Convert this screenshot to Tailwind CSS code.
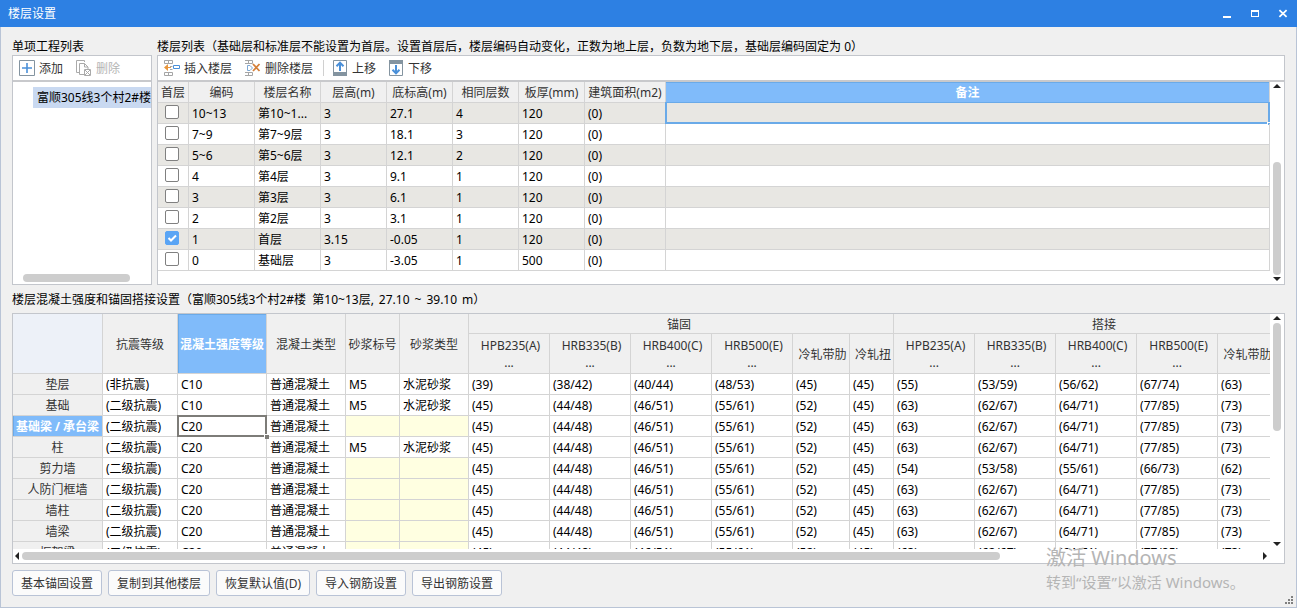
<!DOCTYPE html>
<html lang="zh-CN">
<head>
<meta charset="utf-8">
<title>楼层设置</title>
<script src="https://cdn.jsdelivr.net/npm/@tailwindcss/browser@4"></script>
</head>
<body class="font-['Noto_Sans','Noto_Sans_CJK_SC',sans-serif] text-xs leading-4 text-black">
<div class="relative flex h-screen flex-col overflow-hidden bg-[#f0f0f0]">
  <header class="flex h-[27px] shrink-0 items-center justify-between bg-[#2d80e3] pr-1.5 pl-2 text-white">
    <h1 class="pt-px">楼层设置</h1>
    <div class="flex gap-3">
      <button type="button" aria-label="最小化" class="flex size-4 items-center justify-center"><svg width="10" height="10" viewBox="0 0 10 10" fill="#fff"><path d="M1 7h8v2H1z"/></svg></button>
      <button type="button" aria-label="最大化" class="flex size-4 items-center justify-center"><svg width="10" height="10" viewBox="0 0 10 10" fill="#fff" fill-rule="evenodd"><path d="M1 1h8v7H1zM2 3v4h6V3z"/></svg></button>
      <button type="button" aria-label="关闭" class="flex size-4 items-center justify-center"><svg width="10" height="10" viewBox="0 0 10 10" stroke="#fff" stroke-width="1.8"><path d="M1.400 1.200l7.200 6.600M8.600 1.200L1.400 7.800"/></svg></button>
    </div>
  </header>

  <main class="flex min-h-0 flex-1 flex-col border-x border-b border-[#b9c4d6] px-[11px] pt-3 pb-[11px]">
    <div class="flex gap-[5px]">
      <section class="flex w-[140px] shrink-0 flex-col">
        <h2 class="h-4">单项工程列表</h2>
        <div class="flex h-[230px] flex-col border border-[#c3c6cc] bg-white">
          <div class="flex h-[26px] shrink-0 items-center gap-px border-b-2 border-[#c8c9cc] text-[#333]">
            <button type="button" class="flex h-5 items-center gap-1 px-1.5"><svg width="16" height="16" viewBox="0 0 16 16" fill="none"><path d="M.5.5h15v15H.5z" stroke="#8494a0"/><path d="M3 8h10M8 3v10" stroke="#4a90d9" stroke-width="1.6"/></svg><span class="pt-[2px]">添加</span></button>
            <button type="button" disabled class="flex h-5 items-center gap-1 px-1.5 text-[#b4b4b4]"><svg width="16" height="16" viewBox="0 0 16 16" fill="none" stroke="#aaa"><path d="M3 12.500H.5V.5h8V2"/><path d="M8 14.500H3.500V3.500h5l3.500 3.500v2M8.500 3.500V7H12"/><path d="M8.500 9.500h6v6h-6zM9 10l5 5M14 10l-5 5"/></svg><span class="pt-[2px]">删除</span></button>
          </div>
          <div class="flex min-h-0 flex-1 flex-col justify-between overflow-hidden pt-[5px] pb-[2px]">
            <div class="ml-5 h-[21px] overflow-hidden bg-[#c9d9f1] pl-1 leading-[21px] whitespace-nowrap">富顺305线3个村2#楼</div>
            <div class="ml-2.5 h-2 w-[107px] rounded-full bg-[#cdcdcd]"></div>
          </div>
        </div>
      </section>

      <section class="flex min-w-0 flex-1 flex-col">
        <h2 class="h-4 whitespace-nowrap">楼层列表（基础层和标准层不能设置为首层。设置首层后，楼层编码自动变化，正数为地上层，负数为地下层，基础层编码固定为 0）</h2>
        <div class="flex h-[230px] flex-col border border-[#c3c6cc] bg-white">
          <div class="flex h-[26px] shrink-0 items-center gap-px border-b-2 border-[#c8c9cc] text-[#333]">
            <button type="button" class="flex h-5 items-center gap-1 px-1.5"><svg width="16" height="16" viewBox="0 0 16 16" fill="none"><path d="M.5.5h8v3h-8zM4.500.5v3M.5 12.500h8v3h-8zM4.500 12.500v3M6 6.500h2.500M6 9.500h2.500" stroke="#a5a5a5"/><path d="M7 7H4V4L0 7.500 4 11V8h3z" fill="#e8963c"/><path d="M9.500 5.500h6v3h-6z" stroke="#4a90d9"/></svg><span class="pt-[2px]">插入楼层</span></button>
            <button type="button" class="flex h-5 items-center gap-1 px-1.5"><svg width="16" height="16" viewBox="0 0 16 16" fill="none"><path d="M0 .5h7.500v3H0M3.500.5v3M0 12.500h7.500v3H0M3.500 12.500v3" stroke="#a5a5a5"/><path d="M2.500 5.500H5L7.500 8 5 10.500H2.500z" stroke="#7da7d4"/><path d="M8 4l6.500 7M14.500 4L8 11" stroke="#d5803a" stroke-width="1.800"/></svg><span class="pt-[2px]">删除楼层</span></button>
            <span class="mr-[2px] ml-[3px] h-4 w-px bg-[#d0d0d0]"></span>
            <button type="button" class="flex h-5 items-center gap-1 px-1.5"><svg width="15" height="16" viewBox="0 0 15 16" fill="none"><path d="M.5.5h13v15H.5z" stroke="#8494a0"/><path d="M0 12h14v4H0z" fill="#8494a0"/><path d="M7 11V3M3.500 6.200L7 2.700l3.500 3.500" stroke="#4a90d9" stroke-width="2"/></svg><span class="pt-[2px]">上移</span></button>
            <button type="button" class="flex h-5 items-center gap-1 px-1.5"><svg width="15" height="16" viewBox="0 0 15 16" fill="none"><path d="M.5.5h13v15H.5z" stroke="#8494a0"/><path d="M0 0h14v4H0z" fill="#8494a0"/><path d="M7 5v8M3.500 9.800L7 13.300l3.500-3.500" stroke="#4a90d9" stroke-width="2"/></svg><span class="pt-[2px]">下移</span></button>
          </div>
          <div class="flex min-h-0 flex-1">
            <div class="min-w-0 flex-1 overflow-hidden">
              <table class="w-full table-fixed border-separate border-spacing-0 whitespace-nowrap [&_td]:border-r [&_td]:border-b [&_td]:border-[#d4d4d4] [&_td]:p-0 [&_td]:pt-[2px] [&_td]:pl-[3px] [&_td]:leading-[18px] [&_th]:border-r [&_th]:border-b [&_th]:border-[#d4d4d4] [&_th]:p-0 [&_th]:pt-[2px] [&_th]:leading-[18px]">
                <colgroup><col class="w-[31px]"><col class="w-[66px]"><col class="w-[66px]"><col class="w-[66px]"><col class="w-[66px]"><col class="w-[66px]"><col class="w-[66px]"><col class="w-[81px]"><col></colgroup>
                <thead class="bg-[#f0f0f0] text-[#333]"><tr>
                  <th class="font-normal">首层</th><th class="font-normal">编码</th><th class="font-normal">楼层名称</th><th class="font-normal">层高(m)</th><th class="font-normal">底标高(m)</th><th class="font-normal">相同层数</th><th class="font-normal">板厚(mm)</th><th class="font-normal">建筑面积(m2)</th><th class="bg-[#80bbfa] font-bold text-white shadow-[inset_0_1px_#6aaae8]">备注</th>
                </tr></thead>
                <tbody id="floors"></tbody>
              </table>
            </div>
            <div class="flex w-[14px] shrink-0 flex-col items-center pt-[2px] pb-[3px]">
              <svg width="8" height="4" viewBox="0 0 8 4" fill="#222"><path d="M0 4l4-4 4 4z"/></svg>
              <div class="flex w-2 flex-1 flex-col justify-end pb-[2px]"><div class="h-[113px] rounded-full bg-[#cdcdcd]"></div></div>
              <svg width="8" height="4" viewBox="0 0 8 4" fill="#222"><path d="M0 0l4 4 4-4z"/></svg>
            </div>
          </div>
        </div>
      </section>
    </div>

    <h2 class="mt-[7px] flex h-[21px] gap-[5px] whitespace-pre"><span>楼层混凝土强度和锚固搭接设置（富顺305线3个村2#楼  第10~13层,</span><span>27.10</span><span>~</span><span>39.10</span><span>m）</span></h2>

    <section class="flex min-h-0 flex-1 flex-col border border-[#c3c6cc] bg-white">
      <div class="flex min-h-0 flex-1">
        <div class="min-w-0 flex-1 overflow-hidden">
          <table class="w-[1305px] table-fixed border-separate border-spacing-0 whitespace-nowrap [&_td]:border-r [&_td]:border-b [&_td]:border-[#d4d4d4] [&_td]:p-0 [&_td]:pt-[2px] [&_td]:pl-[3px] [&_td]:leading-[18px] [&_th]:border-r [&_th]:border-b [&_th]:border-[#d4d4d4] [&_th]:p-0">
            <colgroup><col class="w-[90px]"><col class="w-[75px]"><col class="w-[89px]"><col class="w-[79px]"><col class="w-[54px]"><col class="w-[69px]"><col class="w-[81px]"><col class="w-[81px]"><col class="w-[81px]"><col class="w-[81px]"><col class="w-[57px]"><col class="w-[44px]"><col class="w-[81px]"><col class="w-[81px]"><col class="w-[81px]"><col class="w-[81px]"><col class="w-[57px]"><col class="w-[44px]"></colgroup>
            <thead class="bg-[#f0f0f0] text-[#333]">
              <tr class="h-5">
                <th rowspan="2" class="bg-[#edf1f8]"></th>
                <th rowspan="2" class="pt-[2px]! font-normal">抗震等级</th>
                <th rowspan="2" class="bg-[#80bbfa] pt-[2px]! font-bold text-white shadow-[inset_1px_1px_#6aaae8]">混凝土强度等级</th>
                <th rowspan="2" class="pt-[2px]! font-normal">混凝土类型</th>
                <th rowspan="2" class="pt-[2px]! font-normal">砂浆标号</th>
                <th rowspan="2" class="pt-[2px]! font-normal">砂浆类型</th>
                <th colspan="6" class="pt-[2px]! pr-1! leading-[17px] font-normal">锚固</th>
                <th colspan="6" class="pt-[2px]! pr-1! leading-[17px] font-normal">搭接</th>
              </tr>
              <tr id="grades" class="h-10"></tr>
            </thead>
            <tbody id="strength"></tbody>
          </table>
        </div>
        <div class="flex w-[14px] shrink-0 flex-col items-center pt-[2px] pb-[3px]">
          <svg width="8" height="4" viewBox="0 0 8 4" fill="#222"><path d="M0 4l4-4 4 4z"/></svg>
          <div class="flex w-2 flex-1 flex-col py-[3px]"><div class="h-[108px] rounded-full bg-[#cdcdcd]"></div></div>
          <svg width="8" height="4" viewBox="0 0 8 4" fill="#222"><path d="M0 0l4 4 4-4z"/></svg>
        </div>
      </div>
      <div class="flex h-[14px] shrink-0 items-center pr-[17px] pl-[2px]">
        <svg width="4" height="8" viewBox="0 0 4 8" fill="#222"><path d="M4 0v8L0 4z"/></svg>
        <div class="mx-[3px] flex-1"><div class="h-2 w-[79%] rounded-full bg-[#cdcdcd]"></div></div>
        <svg width="4" height="8" viewBox="0 0 4 8" fill="#222"><path d="M0 0v8l4-4z"/></svg>
      </div>
    </section>

    <div class="mt-1.5 flex shrink-0 gap-1.5 text-[#333]">
      <button type="button" class="h-[26px] rounded-[3px] border border-[#b9c3d6] bg-[#fbfbfb] px-2 pt-[2px]">基本锚固设置</button>
      <button type="button" class="h-[26px] rounded-[3px] border border-[#b9c3d6] bg-[#fbfbfb] px-2 pt-[2px]">复制到其他楼层</button>
      <button type="button" class="h-[26px] rounded-[3px] border border-[#b9c3d6] bg-[#fbfbfb] px-2 pt-[2px]">恢复默认值(D)</button>
      <button type="button" class="h-[26px] rounded-[3px] border border-[#b9c3d6] bg-[#fbfbfb] px-2 pt-[2px]">导入钢筋设置</button>
      <button type="button" class="h-[26px] rounded-[3px] border border-[#b9c3d6] bg-[#fbfbfb] px-2 pt-[2px]">导出钢筋设置</button>
    </div>
  </main>

  <!-- system notice and resize grip float over the dialog -->
  <div class="pointer-events-none absolute right-[51px] bottom-4 w-[200px] whitespace-nowrap text-[#b5b5b5]">
    <p class="text-xl leading-7">激活 Windows</p>
    <p class="text-[15px] leading-5">转到“设置”以激活 Windows。</p>
  </div>
  <svg class="absolute right-1 bottom-1" width="8" height="8" viewBox="0 0 8 8" fill="#808080"><path d="M6 0h2v2H6zM3 3h2v2H3zM6 3h2v2H6zM0 6h2v2H0zM3 6h2v2H3zM6 6h2v2H6z"/></svg>
</div>

<script>
const floors = [
  ['10~13', '第10~1...', '3', '27.1', '4', '120'],
  ['7~9', '第7~9层', '3', '18.1', '3', '120'],
  ['5~6', '第5~6层', '3', '12.1', '2', '120'],
  ['4', '第4层', '3', '9.1', '1', '120'],
  ['3', '第3层', '3', '6.1', '1', '120'],
  ['2', '第2层', '3', '3.1', '1', '120'],
  ['1', '首层', '3.15', '-0.05', '1', '120'],
  ['0', '基础层', '3', '-3.05', '1', '500']
];
const remarkCursor = '<div class="absolute -top-px -right-px -bottom-px -left-px border-2 border-t border-[#6aaae8]"></div><div class="absolute -right-px -bottom-[2px] size-[3px] border-t border-l border-white bg-[#6aaae8]"></div>';
document.getElementById('floors').innerHTML = floors.map((f, i) => {
  const checked = f[0] === '1';
  return `<tr class="odd:bg-[#e8e7e3]">
    <td class="align-top"><div class="flex h-[18px] items-start pl-1"><input type="checkbox" aria-label="首层 ${f[1]}" ${checked ? 'checked' : ''} class="size-[14px] appearance-none rounded-[2px] border border-[#808080] bg-white checked:border-[#5aa5f5] checked:bg-[#5aa5f5]">${checked ? '<svg class="pointer-events-none -ml-[14px]" width="14" height="14" viewBox="0 0 14 14" fill="none" stroke="#fff" stroke-width="2"><path d="M3.500 7L6 9.500l5-5"/></svg>' : ''}</div></td>
    ${f.map(v => `<td>${v}</td>`).join('')}
    <td>(0)</td><td class="relative">${i === 0 ? remarkCursor : ''}</td></tr>`;
}).join('');

const steel = ['HPB235(A)', 'HRB335(B)', 'HRB400(C)', 'HRB500(E)'];
const group = steel.map(s => `<th class="font-normal"><div class="pt-[2px] pl-[3px] leading-5">${s}</div><div class="h-[17px] leading-[14px]">...</div></th>`).join('')
  + '<th class="overflow-hidden pt-[2px]! pl-[3px]! font-normal">冷轧带肋</th><th class="overflow-hidden pt-[2px]! pl-[3px]! font-normal">冷轧扭</th>';
document.getElementById('grades').innerHTML = group + group;

const usual = ['45', '44/48', '46/51', '55/61', '52', '45', '63', '62/67', '64/71', '77/85', '73', '63'];
const parts = [
  ['垫层', '非抗震', 'C10', true, ['39', '38/42', '40/44', '48/53', '45', '45', '55', '53/59', '56/62', '67/74', '63', '63']],
  ['基础', '二级抗震', 'C10', true, usual],
  ['基础梁 / 承台梁', '二级抗震', 'C20', false, usual],
  ['柱', '二级抗震', 'C20', true, usual],
  ['剪力墙', '二级抗震', 'C20', false, ['45', '44/48', '46/51', '55/61', '52', '45', '54', '53/58', '55/61', '66/73', '62', '54']],
  ['人防门框墙', '二级抗震', 'C20', false, usual],
  ['墙柱', '二级抗震', 'C20', false, usual],
  ['墙梁', '二级抗震', 'C20', false, usual],
  ['框架梁', '二级抗震', 'C20', false, usual]
];
const gradeCursor = '<div class="absolute -inset-px border-2 border-[#7d7c78]"></div><div class="absolute -right-[3px] -bottom-[3px] z-10 size-[5px] border-t border-l border-white bg-[#7d7c78]"></div>';
document.getElementById('strength').innerHTML = parts.map((p, i) => {
  const current = i === 2;
  const head = current ? 'bg-[#80bbfa] pt-[2px]! font-bold text-white leading-[18px] shadow-[inset_1px_0_#6aaae8]' : 'bg-[#f0f0f0] pt-[2px]! font-normal text-[#333] leading-[18px]';
  const mortar = p[3] ? '<td>M5</td><td>水泥砂浆</td>' : '<td class="bg-[#ffffe1]"></td><td class="bg-[#ffffe1]"></td>';
  return `<tr><th scope="row" class="${head}">${p[0]}</th><td>(${p[1]})</td><td class="relative">${current ? gradeCursor : ''}${p[2]}</td><td>普通混凝土</td>${mortar}${p[4].map(v => `<td>(${v})</td>`).join('')}</tr>`;
}).join('');
</script>
</body>
</html>
